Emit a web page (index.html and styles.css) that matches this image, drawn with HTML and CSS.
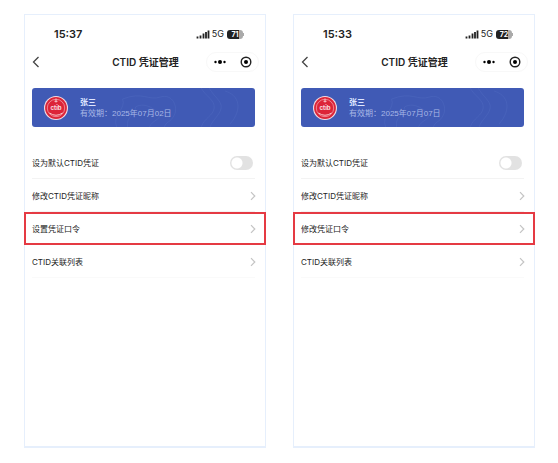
FILE: index.html
```html
<!DOCTYPE html>
<html lang="zh-CN">
<head>
<meta charset="utf-8">
<meta name="viewport" content="width=device-width, initial-scale=1">
<title>CTID 凭证管理</title>
<link rel="stylesheet" href="styles.css">
</head>
<body>
<svg width="0" height="0" class="defs" aria-hidden="true">
  <symbol id="signal" viewBox="0 0 14 9"><path d="M1.5 6.5v2M4.5 5.5v3M7.5 3.5v5M10 2v6.500M12.500 .5v8" stroke="#222" stroke-width="1.800" fill="none"/></symbol>
  <symbol id="back" viewBox="0 0 8 12"><path d="M6.500 1L1.500 6l5 5" fill="none" stroke="#444" stroke-width="1.300"/></symbol>
  <symbol id="next" viewBox="0 0 6 10"><path d="M1 1.200L4.800 5 1 8.800" fill="none" stroke="#c4c4c4" stroke-width="1.200"/></symbol>
  <symbol id="dots" viewBox="0 0 14 6"><circle cx="2.500" cy="3" r="1.200"/><circle cx="7" cy="3" r="2"/><circle cx="11.500" cy="3" r="1.200"/></symbol>
  <symbol id="target" viewBox="0 0 12 12"><circle cx="6" cy="6" r="4.800" fill="none" stroke="#222" stroke-width="1.400"/><circle cx="6" cy="6" r="2"/></symbol>
  <symbol id="waves" viewBox="0 0 224 39"><g fill="none" stroke="#7890d8" stroke-opacity=".14"><path d="M85 39c-5-12 10-18 6-28 20-8 26 2 38-2s18 10 14 18-8 6-10 12M96 39c-2-10 8-12 8-20 10-6 22 4 24 8s-8 6-10 12M170 0c4 8 14 12 13 20s-10 10-13 19M178 0c5 9 13 13 12 20s-9 12-11 19M194 3c14 4 18 18 5 33"/></g></symbol>
  <symbol id="seal" viewBox="0 0 24 24">
    <circle cx="12" cy="12" r="12" fill="#f2dce3"/><circle cx="12" cy="12" r="10.900" fill="#dc2438"/>
    <circle cx="12" cy="12" r="8.700" fill="none" stroke="#f29ca6" stroke-width=".8"/>
    <path d="M12 2.500v4M10.500 5.300h3M5.500 17q6.500 4.500 13 0" fill="none" stroke="#f8c2c8" stroke-width="1"/>
  </symbol>
</svg>
<main class="screens">
  <section class="phone">
    <div class="status"><span class="time">15:37</span><svg class="signal"><use href="#signal"/></svg><span class="net">5G</span><span class="battery">71</span></div>
    <header class="nav">
      <button class="back" aria-label="返回"><svg><use href="#back"/></svg></button>
      <h1>CTID 凭证管理</h1>
      <div class="capsule"><button aria-label="更多"><svg class="dots"><use href="#dots"/></svg></button><button aria-label="关闭"><svg class="target"><use href="#target"/></svg></button></div>
    </header>
    <div class="card"><svg class="waves" preserveAspectRatio="none"><use href="#waves"/></svg><svg class="seal" viewBox="0 0 24 24"><use href="#seal"/><text x="12" y="14" text-anchor="middle" class="seal-text">ctib</text></svg><div><p class="name">张三</p><p class="valid">有效期：2025年07月02日</p></div></div>
    <div class="list">
      <label class="row">设为默认CTID凭证<input type="checkbox" class="toggle"></label>
      <a class="row" href="#">修改CTID凭证昵称<svg class="next"><use href="#next"/></svg></a>
      <a class="row marked" href="#">设置凭证口令<svg class="next"><use href="#next"/></svg></a>
      <a class="row" href="#">CTID关联列表<svg class="next"><use href="#next"/></svg></a>
    </div>
  </section>
  <section class="phone">
    <div class="status"><span class="time">15:33</span><svg class="signal"><use href="#signal"/></svg><span class="net">5G</span><span class="battery">72</span></div>
    <header class="nav">
      <button class="back" aria-label="返回"><svg><use href="#back"/></svg></button>
      <h1>CTID 凭证管理</h1>
      <div class="capsule"><button aria-label="更多"><svg class="dots"><use href="#dots"/></svg></button><button aria-label="关闭"><svg class="target"><use href="#target"/></svg></button></div>
    </header>
    <div class="card"><svg class="waves" preserveAspectRatio="none"><use href="#waves"/></svg><svg class="seal" viewBox="0 0 24 24"><use href="#seal"/><text x="12" y="14" text-anchor="middle" class="seal-text">ctib</text></svg><div><p class="name">张三</p><p class="valid">有效期：2025年07月07日</p></div></div>
    <div class="list">
      <label class="row">设为默认CTID凭证<input type="checkbox" class="toggle"></label>
      <a class="row" href="#">修改CTID凭证昵称<svg class="next"><use href="#next"/></svg></a>
      <a class="row marked" href="#">修改凭证口令<svg class="next"><use href="#next"/></svg></a>
      <a class="row" href="#">CTID关联列表<svg class="next"><use href="#next"/></svg></a>
    </div>
  </section>
</main>
</body>
</html>
```
FILE: styles.css
```css
* { box-sizing: border-box; }
body {
  margin: 0;
  background: #fff;
  color: #222;
  font-family: Inter, "Noto Sans CJK SC", sans-serif;
}
.defs { position: absolute; }
h1, p { margin: 0; }
button { padding: 0; border: 0; background: none; display: flex; }
.screens {
  min-height: 100vh;
  padding: 14px 23px 15px 24px;
  display: grid;
  grid-template-columns: 1fr 1fr;
  gap: 27px;
}
.phone {
  border: 1px solid #e6effc;
  border-bottom-width: 2px;
  padding-top: 11px;
}
.status {
  display: flex;
  align-items: center;
  height: 16px;
  padding: 0 22px 0 29px;
}
.time { flex: 1; font-size: 11px; font-weight: 600; }
.signal { width: 14px; height: 9px; }
.net { margin: 0 3px 0 2px; font-size: 9px; line-height: 16px; }
.battery {
  position: relative;
  width: 16px;
  height: 9px;
  border-radius: 3px;
  background: linear-gradient(90deg, #222 72%, #aaa 72%);
  color: #fff;
  font-size: 7px;
  font-weight: 700;
  line-height: 9px;
  text-align: center;
}
.battery::after {
  content: "";
  position: absolute;
  left: 100%;
  top: 3px;
  width: 1px;
  height: 3px;
  background: #aaa;
}
.nav {
  display: grid;
  grid-template-columns: 1fr auto 1fr;
  align-items: center;
  height: 20px;
  margin-top: 10px;
  padding: 0 6px 0 7px;
}
.nav h1 { font-size: 10px; font-weight: 600; line-height: 20px; }
.back svg { width: 8px; height: 12px; }
.capsule {
  justify-self: end;
  display: flex;
  align-items: center;
  justify-content: space-between;
  width: 53px;
  height: 20px;
  padding: 0 6px;
  border: 1px solid #f8f8f8;
  border-radius: 10px;
}
.dots { width: 14px; height: 6px; }
.target { width: 12px; height: 12px; }
.card {
  position: relative;
  display: flex;
  align-items: center;
  gap: 12px;
  height: 39px;
  margin: 16px 10px 19px 7px;
  padding-left: 12px;
  border-radius: 3px;
  background: #405ab5;
  color: #dfe6ff;
  font-size: 8px;
  line-height: 12px;
}
.waves { position: absolute; inset: 0; width: 100%; height: 100%; }
.seal { position: relative; width: 24px; height: 24px; }
.seal-text { font-size: 6px; font-weight: 700; fill: #fbdfe2; }
.name { font-weight: 700; }
.valid {
  color: #a9b8e6;
  font-family: "Liberation Sans", "Noto Sans CJK SC", sans-serif;
}
.row {
  display: flex;
  align-items: center;
  justify-content: space-between;
  height: 33px;
  padding: 0 9px 0 7px;
  color: #222;
  font-size: 8px;
  text-decoration: none;
  background: linear-gradient(#f3f3f3, #f3f3f3) 7px 100% / calc(100% - 17px) 1px no-repeat;
}
.row:last-child { background-image: linear-gradient(#fafafa, #fafafa); }
.marked {
  margin: 0 -1px;
  padding: 0 8px 0 6px;
  border: 2px solid #e53a43;
  background: none;
}
.next { width: 6px; height: 10px; }
.toggle {
  appearance: none;
  width: 23px;
  height: 14px;
  margin: 0 3px 0 0;
  border-radius: 7px;
  background: radial-gradient(circle at 7px 7px, #fff 5px, #e2e2e2 6px);
}
```
